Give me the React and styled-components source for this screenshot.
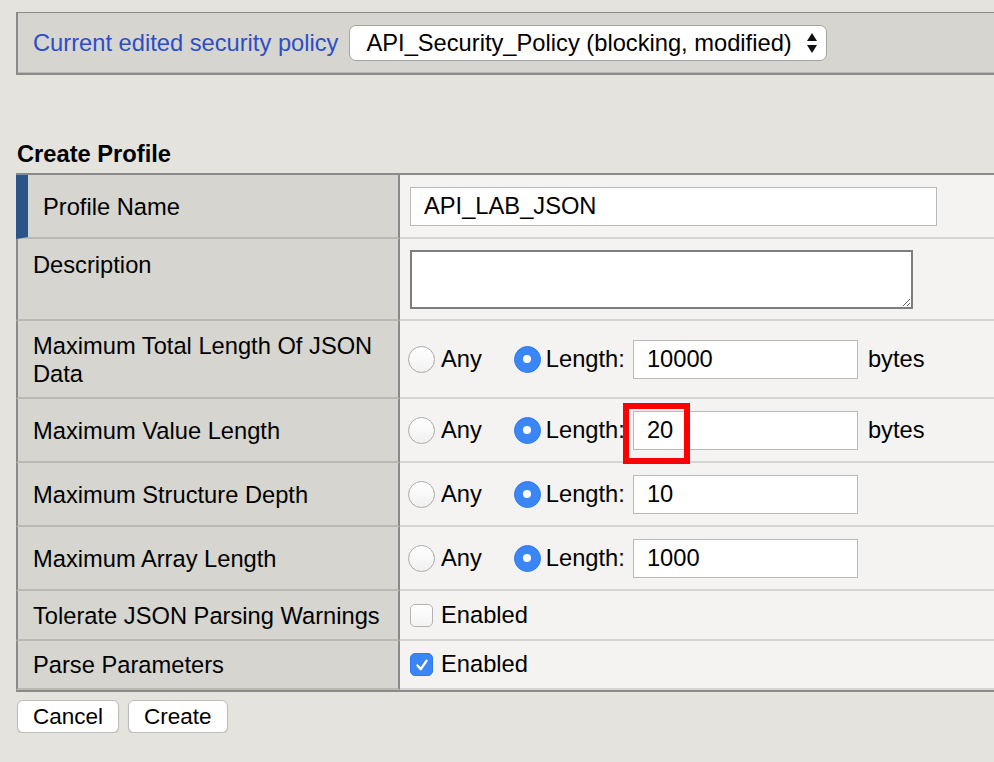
import styled, { createGlobalStyle } from 'styled-components';

const GlobalStyle = createGlobalStyle`
  html, body {
    margin: 0;
    overflow: hidden;
    background: #e4e3de;
  }
  body {
    font-family: 'Liberation Sans', Arial, sans-serif;
    color: #111;
  }
`;

const rows = [
    { label: 'Profile Name', type: 'text', value: 'API_LAB_JSON', height: 64, accent: true },
    { label: 'Description', type: 'textarea', height: 82, top: true },
    { label: 'Maximum Total Length Of JSON Data', type: 'length', value: '10000', bytes: true, height: 78 },
    { label: 'Maximum Value Length', type: 'length', value: '20', bytes: true, height: 64, marked: true },
    { label: 'Maximum Structure Depth', type: 'length', value: '10', height: 64 },
    { label: 'Maximum Array Length', type: 'length', value: '1000', height: 64 },
    { label: 'Tolerate JSON Parsing Warnings', type: 'check', checked: false, height: 50 },
    { label: 'Parse Parameters', type: 'check', checked: true, height: 49 },
];

function Arrows() {
    return (
        <svg width="12" height="22" viewBox="0 0 12 22">
            <polygon points="6,1 11,9 1,9" fill="#111" />
            <polygon points="1,13 11,13 6,21" fill="#111" />
        </svg>
    );
}

function Check() {
    return (
        <svg width="16" height="16" viewBox="0 0 16 16">
            <path d="M3.5 8.5 L6.8 12.2 L12.5 3.8" fill="none" stroke="#fff" strokeWidth="2.4" strokeLinecap="round" strokeLinejoin="round" />
        </svg>
    );
}

function renderField(row) {
    if (row.type === 'text') {
        return <TextInput defaultValue={row.value} $width={527} />;
    }
    if (row.type === 'textarea') {
        return <TextArea />;
    }
    if (row.type === 'check') {
        return (
            <Choice>
                <Box $checked={row.checked}>{row.checked && <Check />}</Box>
                <span>Enabled</span>
            </Choice>
        );
    }
    return (
        <Choice>
            <Radio />
            <span>Any</span>
            <Radio $checked $gap={32} />
            <span>Length:</span>
            <Marked>
                <TextInput defaultValue={row.value} $width={225} />
                {row.marked && <RedBox />}
            </Marked>
            {row.bytes && <Unit>bytes</Unit>}
        </Choice>
    );
}

export default function App() {
    return (
        <>
            <GlobalStyle />
            <Page>
                <TopBar>
                    <PolicyLabel>Current edited security policy</PolicyLabel>
                    <Select>
                        <span>API_Security_Policy (blocking, modified)</span>
                        <Arrows />
                    </Select>
                </TopBar>

                <Title>Create Profile</Title>

                <Table>
                    {rows.map((row, index) =>
                        <Row key={index} $height={row.height}>
                            <LabelCell $accent={row.accent} $top={row.top}>{row.label}</LabelCell>
                            <FieldCell>{renderField(row)}</FieldCell>
                        </Row>
                    )}
                </Table>

                <Buttons>
                    <Button>Cancel</Button>
                    <Button>Create</Button>
                </Buttons>
            </Page>
        </>
    );
}

const Page = styled.div`
    width: 1010px;
    padding: 12px 0 0 16px;
`;

const TopBar = styled.div`
    display: flex;
    align-items: center;
    box-sizing: border-box;
    height: 63px;
    padding-left: 15px;
    background: #d6d5d0;
    border-top: 1px solid #8a8a8a;
    border-left: 2px solid #8a8a8a;
    border-bottom: 2px solid #8a8a8a;
    box-shadow: inset 0 -1px 0 #b9b8b3;
`;

const PolicyLabel = styled.span`
    font-size: 23.7px;
    color: #2c4fc7;
`;

const Select = styled.div`
    display: flex;
    align-items: center;
    justify-content: space-between;
    box-sizing: border-box;
    width: 478px;
    height: 36px;
    margin-left: 11px;
    padding: 0 8px 0 16px;
    background: #fff;
    border: 1px solid #a3a3a3;
    border-radius: 7px;
    font-size: 23.7px;
    color: #000;
`;

const Title = styled.h2`
    margin: 66px 0 5px 1px;
    font-size: 23.7px;
    font-weight: 700;
    line-height: 27px;
    color: #000;
`;

const Table = styled.div`
    display: flex;
    flex-direction: column;
    border-top: 2px solid #8a8a8a;
    border-bottom: 2px solid #8a8a8a;
`;

const Row = styled.div`
    display: grid;
    grid-template-columns: 384px 1fr;
    height: ${props => props.$height}px;
`;

const LabelCell = styled.div`
    display: flex;
    align-items: ${props => props.$top ? 'flex-start' : 'center'};
    box-sizing: border-box;
    padding: ${props => props.$top ? '12px' : '1px'} 8px 0 15px;
    background: #d6d5d0;
    border-left: ${props => props.$accent ? '12px solid #2b5489' : '2px solid #8a8a8a'};
    border-right: 2px solid #8a8a8a;
    border-bottom: 2px solid #b9b8b3;
    font-size: 23.7px;
    line-height: 28px;
    color: #000;
`;

const FieldCell = styled.div`
    display: flex;
    align-items: center;
    box-sizing: border-box;
    padding-left: 10px;
    background: #f4f3f1;
    border-bottom: 2px solid #d6d5d1;
`;

const TextInput = styled.input`
    box-sizing: border-box;
    width: ${props => props.$width}px;
    height: 39px;
    padding: 0 13px;
    background: #fff;
    border: 1px solid #b9b9b9;
    border-radius: 0;
    outline: none;
    font-family: 'Liberation Sans', Arial, sans-serif;
    font-size: 23.7px;
    color: #000;
`;

const TextArea = styled.textarea`
    box-sizing: border-box;
    width: 503px;
    height: 59px;
    background: #fff;
    border: 2px solid #7e7e7e;
    border-radius: 0;
    outline: none;
`;

const Choice = styled.div`
    display: flex;
    align-items: center;
    font-size: 23.7px;
    color: #000;
`;

const Radio = styled.span`
    display: inline-flex;
    align-items: center;
    justify-content: center;
    box-sizing: border-box;
    width: 27px;
    height: 27px;
    margin: 0 ${props => props.$gap ? 5 : 6}px 0 ${props => props.$gap ? props.$gap : -2}px;
    border-radius: 50%;
    border: 1px solid ${props => props.$checked ? '#2f7ae9' : '#aaaaaa'};
    background: ${props => props.$checked ? '#3b86f6' : 'linear-gradient(#ffffff, #f1f1f1)'};

    &::after {
        content: '';
        display: ${props => props.$checked ? 'block' : 'none'};
        width: 8px;
        height: 8px;
        border-radius: 50%;
        background: #fff;
    }
`;

const Box = styled.span`
    display: inline-flex;
    align-items: center;
    justify-content: center;
    box-sizing: border-box;
    width: 23px;
    height: 23px;
    margin-right: 8px;
    border-radius: 5px;
    border: 1px solid ${props => props.$checked ? '#2f7ae9' : '#b3b3b3'};
    background: ${props => props.$checked ? '#3b86f6' : 'linear-gradient(#ffffff, #f3f3f3)'};
`;

const Marked = styled.div`
    position: relative;
    margin-left: 8px;
    display: flex;
`;

const RedBox = styled.div`
    position: absolute;
    left: -10px;
    top: -8px;
    width: 67px;
    height: 61px;
    box-sizing: border-box;
    border: 6px solid #ff0000;
`;

const Unit = styled.span`
    margin-left: 10px;
`;

const Buttons = styled.div`
    display: flex;
    gap: 9px;
    margin: 8px 0 0 1px;
`;

const Button = styled.button`
    height: 33px;
    padding: 0 15px;
    background: #fff;
    border: 1px solid #bdbdbd;
    border-radius: 6px;
    box-shadow: 0 1px 1px rgba(0, 0, 0, 0.12);
    font-family: 'Liberation Sans', Arial, sans-serif;
    font-size: 22.5px;
    color: #000;
`;
